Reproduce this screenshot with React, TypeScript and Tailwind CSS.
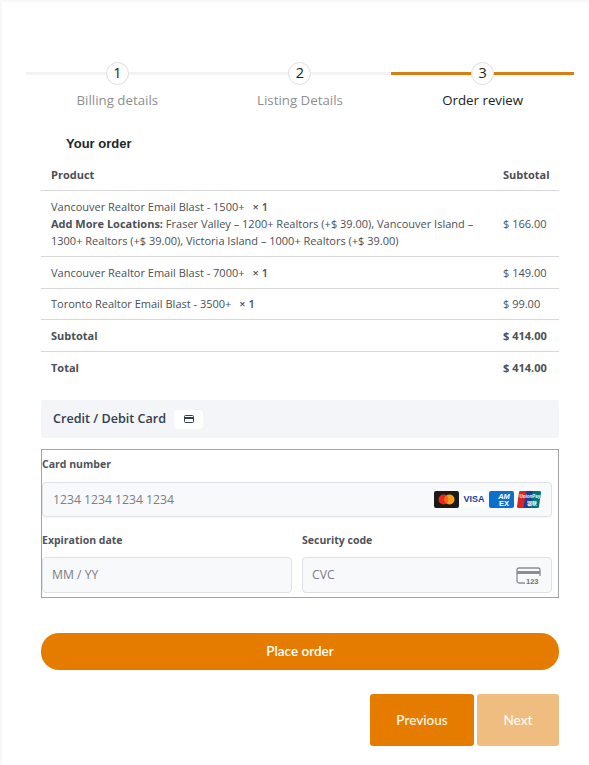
const steps = [
  { n: '1', label: 'Billing details', active: false },
  { n: '2', label: 'Listing Details', active: false },
  { n: '3', label: 'Order review', active: true },
]

const rows = [
  { name: 'Vancouver Realtor Email Blast - 7000+', price: '$ 149.00', h: 'h-[32px]' },
  { name: 'Toronto Realtor Email Blast - 3500+', price: '$ 99.00', h: 'h-[31px]' },
]

function Qty() {
  return <strong className="font-semibold ml-[8px]">× 1</strong>
}

function CardBrands() {
  return (
    <div className="flex items-center gap-[3px]">
      {/* mastercard */}
      <svg width="25" height="17" viewBox="0 0 25 17">
        <rect width="25" height="17" rx="2" fill="#1a1a1a" />
        <circle cx="9.500" cy="8.500" r="5" fill="#e8291c" />
        <circle cx="15.500" cy="8.500" r="5" fill="#f79e1b" />
        <path d="M12.500 4.500a5 5 0 0 1 0 8a5 5 0 0 1 0-8z" fill="#f26a12" />
      </svg>
      {/* visa */}
      <div className="w-[24px] h-[17px] rounded-[2px] bg-white flex items-center justify-center text-[9px] font-bold text-[#1a3e9c] font-['Liberation_Sans',sans-serif]">
        VISA
      </div>
      {/* amex */}
      <svg width="25" height="17" viewBox="0 0 25 17">
        <rect width="25" height="17" rx="2" fill="#0a70cc" />
        <text x="15" y="8" fontSize="7.500" fontWeight="700" fontStyle="italic" fill="#fff" textAnchor="middle" fontFamily="Liberation Sans, sans-serif">AM</text>
        <text x="15" y="15" fontSize="7.500" fontWeight="700" fill="#fff" textAnchor="middle" fontFamily="Liberation Sans, sans-serif">EX</text>
      </svg>
      {/* unionpay */}
      <svg width="24" height="17" viewBox="0 0 24 17">
        <path d="M3.500 0H10L7.500 17H1.500A1.500 1.500 0 0 1 0 15.300L2 1.300A1.500 1.500 0 0 1 3.500 0z" fill="#d8232a" />
        <path d="M9 0h8l-2.500 17H6.500z" fill="#1b3f8f" />
        <path d="M16 0h6.500A1.500 1.500 0 0 1 24 1.700L22 15.300A1.500 1.500 0 0 1 20.500 17H13.500z" fill="#00747a" />
        <text x="13" y="7" fontSize="4.500" fontWeight="700" fill="#fff" textAnchor="middle" fontFamily="Liberation Sans, sans-serif">UnionPay</text>
        <text x="15" y="13.500" fontSize="5" fontWeight="700" fill="#fff" textAnchor="middle" fontFamily="Noto Sans CJK SC, sans-serif">银联</text>
      </svg>
    </div>
  )
}

function CvcIcon() {
  return (
    <svg width="25" height="18" viewBox="0 0 25 18" fill="none">
      <path d="M9 16H3a2 2 0 0 1-2-2V3a2 2 0 0 1 2-2h19a2 2 0 0 1 2 2v6" stroke="#8a8d94" strokeWidth="1.300" />
      <rect x="1" y="4" width="23" height="3" fill="#8a8d94" />
      <text x="10" y="17" fontSize="7.500" fontWeight="700" fill="#6f7279" fontFamily="Liberation Sans, sans-serif">123</text>
    </svg>
  )
}

export default function App() {
  return (
    <div className="w-[589px] h-[765px] bg-white overflow-hidden font-['Open_Sans',sans-serif] border-l-2 border-t-2 border-[#f8f8f8]">
      {/* Stepper */}
      <div className="grid grid-cols-3 w-[548px] ml-[24px] mt-[60px]">
        {steps.map((s) => (
          <div key={s.n} className="flex flex-col items-center">
            <div className="relative w-full h-[23px] flex items-center justify-center">
              <div className={`absolute left-0 right-0 top-[10px] h-[3px] ${s.active ? 'bg-[#d97e14]' : 'bg-[#f3f3f3]'}`} />
              <div className="relative w-[23px] h-[23px] rounded-full bg-white border border-[#dedede] flex items-center justify-center text-[14.500px] leading-none text-[#222]">
                {s.n}
              </div>
            </div>
            <div className={`mt-[5px] text-[13.300px] leading-[20px] ${s.active ? 'text-[#222]' : 'text-[#8f8f8f]'}`}>
              {s.label}
            </div>
          </div>
        ))}
      </div>

      {/* Order table */}
      <div className="ml-[39px] w-[518px] mt-[25px]">
        <h3 className="ml-[25px] text-[13px] leading-[18px] font-bold text-[#23262b] font-['Liberation_Sans',sans-serif]">Your order</h3>

        <div className="mt-[8px] text-[11px] text-[#4b4f56]">
          <div className="flex items-center h-[30px] pl-[10px] font-bold border-b border-[#d8d8d8]">
            <div className="flex-1">Product</div>
            <div className="w-[56px]">Subtotal</div>
          </div>

          <div className="flex items-center h-[66px] pl-[10px] border-b border-[#d8d8d8] leading-[17px]">
            <div className="flex-1 pr-[24px]">
              <div>Vancouver Realtor Email Blast - 1500+<Qty /></div>
              <div>
                <strong className="font-bold">Add More Locations:</strong> Fraser Valley – 1200+ Realtors (+$ 39.00), Vancouver Island – 1300+ Realtors (+$ 39.00), Victoria Island – 1000+ Realtors (+$ 39.00)
              </div>
            </div>
            <div className="w-[56px] shrink-0">$ 166.00</div>
          </div>

          {rows.map((r) => (
            <div key={r.name} className={`flex items-center ${r.h} pl-[10px] pt-[1px] border-b border-[#d8d8d8]`}>
              <div className="flex-1">{r.name}<Qty /></div>
              <div className="w-[56px]">{r.price}</div>
            </div>
          ))}

          <div className="flex items-center h-[32px] pl-[10px] pt-[1px] font-bold border-b border-[#d8d8d8]">
            <div className="flex-1">Subtotal</div>
            <div className="w-[56px]">$ 414.00</div>
          </div>
          <div className="flex items-center h-[32px] pl-[10px] font-bold">
            <div className="flex-1">Total</div>
            <div className="w-[56px]">$ 414.00</div>
          </div>
        </div>

        {/* Payment tab */}
        <div className="mt-[16px] h-[38px] bg-[#f3f5f9] flex items-center pl-[12px] gap-[8px] rounded-[2px]">
          <span className="text-[12.600px] font-semibold text-[#33404f] pt-[1px]">Credit / Debit Card</span>
          <span className="w-[29px] h-[19px] bg-white rounded-[4px] flex items-center justify-center">
            <svg width="10" height="8" viewBox="0 0 10 8" fill="none">
              <rect x="0.500" y="0.500" width="9" height="7" rx="1" stroke="#33404f" />
              <rect x="0.500" y="2" width="9" height="2" fill="#33404f" />
            </svg>
          </span>
        </div>

        {/* Card fields */}
        <div className="mt-[11px] h-[149px] border border-[#a3a3a3] text-[10.500px]">
          <div className="pt-[7px] font-bold text-[#4f5359] leading-[15px]">Card number</div>
          <div className="mt-[10px] w-[510px] h-[35px] bg-[#f8f9fb] border border-[#dfe1e6] rounded-[4px] flex items-center justify-between pl-[10px] pr-[10px] shadow-[0_1px_1px_rgba(0,0,0,0.03)]">
            <span className="text-[12.200px] text-[#7b7e84] pt-[1px]">1234 1234 1234 1234</span>
            <CardBrands />
          </div>
          <div className="mt-[16px] grid grid-cols-2 gap-[10px] w-[510px]">
            <div>
              <div className="font-bold text-[#4f5359] leading-[15px]">Expiration date</div>
              <div className="mt-[9px] h-[36px] bg-[#f8f9fb] border border-[#dfe1e6] rounded-[4px] flex items-center pl-[9px] pt-[1px] text-[12.200px] text-[#7b7e84]">
                MM / YY
              </div>
            </div>
            <div>
              <div className="font-bold text-[#4f5359] leading-[15px]">Security code</div>
              <div className="mt-[9px] h-[36px] bg-[#f8f9fb] border border-[#dfe1e6] rounded-[4px] flex items-center justify-between pl-[9px] pr-[10px] pt-[1px] text-[12.200px] text-[#7b7e84]">
                CVC
                <CvcIcon />
              </div>
            </div>
          </div>
        </div>

        <button className="mt-[35px] w-full h-[37px] rounded-[18px] bg-[#e57c00] text-white text-[13.500px] font-semibold font-['Lato',sans-serif]">
          Place order
        </button>

        <div className="mt-[24px] flex justify-end gap-[3px]">
          <button className="w-[104px] h-[52px] rounded-[3px] bg-[#e57c00] text-[#fdf3e2] text-[13.500px] font-semibold font-['Lato',sans-serif]">
            Previous
          </button>
          <button className="w-[82px] h-[52px] rounded-[3px] bg-[#f0bd80] text-[#fff8ee] text-[13.500px] font-semibold font-['Lato',sans-serif]">
            Next
          </button>
        </div>
      </div>
    </div>
  )
}
